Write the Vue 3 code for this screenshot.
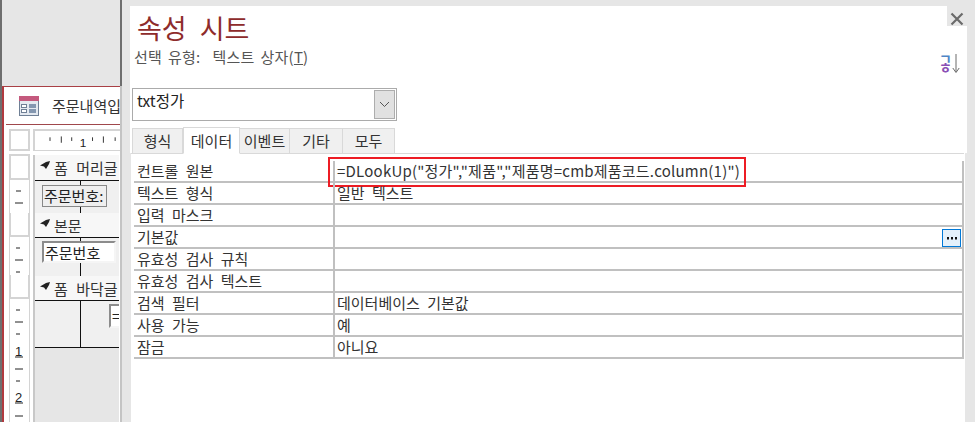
<script setup>
const rows = [
  ['컨트롤 원본', '=DLookUp("정가","제품","제품명=cmb제품코드.column(1)")'],
  ['텍스트 형식', '일반 텍스트'],
  ['입력 마스크', ''],
  ['기본값', ''],
  ['유효성 검사 규칙', ''],
  ['유효성 검사 텍스트', ''],
  ['검색 필터', '데이터베이스 기본값'],
  ['사용 가능', '예'],
  ['잠금', '아니요'],
]
const tabs = ['형식', '데이터', '이벤트', '기타', '모두']
</script>

<template>
  <div class="app">
    <section class="designer">
      <div class="form-window">
        <div class="win-title">
          <svg class="form-icon" width="20" height="20" viewBox="0 0 20 20">
            <rect x="0.5" y="0.5" width="19" height="19" fill="#e4e9f0" stroke="#6f7f95" />
            <rect x="0" y="0" width="20" height="5" fill="#c4597d" />
            <rect x="2.5" y="8.5" width="5" height="3" fill="#fff" stroke="#6f7f95" />
            <rect x="2.5" y="13.5" width="5" height="3" fill="#fff" stroke="#6f7f95" />
            <rect x="10" y="8" width="7" height="4" fill="#8497b0" />
            <rect x="10" y="13" width="7" height="4" fill="#8497b0" />
          </svg>
          <span class="win-name">주문내역입력</span>
        </div>
        <div class="ruler-row">
          <div class="corner"></div>
          <svg class="h-ruler" width="87" height="21" viewBox="0 0 87 21">
            <path d="M12 7v4M24.500 6v7M36 7v4M59 7v4M71 6v7M84 7v4" stroke="#222" fill="none" />
            <text x="45" y="18" class="ruler-num">1</text>
          </svg>
        </div>
        <div class="design-body">
          <div class="v-ruler">
            <div class="sel sel-top"></div>
            <svg class="v-marks" width="19" height="33" viewBox="0 0 19 33"><path d="M6 11h5M5 23h8" stroke="#222" fill="none"/></svg>
            <div class="sel"></div>
            <svg class="v-marks" width="19" height="38" viewBox="0 0 19 38"><path d="M6 11h4M5 23h8M6 35h4" stroke="#222" fill="none"/></svg>
            <div class="sel"></div>
            <svg class="v-marks" width="19" height="123" viewBox="0 0 19 123">
              <path d="M6 11h4M5 23h8M6 35h4M5 58h8M5 70h8M6 82h4M5 104h8M5 117h8" stroke="#222" fill="none"/>
              <text x="5" y="57" class="ruler-num">1</text>
              <text x="5" y="103" class="ruler-num">2</text>
            </svg>
          </div>
          <div class="sections">
            <div class="band band-1"><svg class="mark" width="10" height="8" viewBox="0 0 10 8"><path d="M0 4.500L6 1L10 0L9 3L6 8L4 5.500z" fill="#222"/></svg>폼 머리글</div>
            <div class="area area-head">
              <span class="ctl-label">주문번호:</span>
            </div>
            <div class="band"><svg class="mark" width="10" height="8" viewBox="0 0 10 8"><path d="M0 4.500L6 1L10 0L9 3L6 8L4 5.500z" fill="#222"/></svg>본문</div>
            <div class="area area-body">
              <span class="ctl-input">주문번호</span>
            </div>
            <div class="band"><svg class="mark" width="10" height="8" viewBox="0 0 10 8"><path d="M0 4.500L6 1L10 0L9 3L6 8L4 5.500z" fill="#222"/></svg>폼 바닥글</div>
            <div class="area area-foot">
              <span class="ctl-input ctl-foot">=</span>
            </div>
          </div>
        </div>
      </div>
    </section>

    <div class="split"></div>

    <main class="panel-wrap">
      <div class="close-row"><span class="close">
        <svg width="14" height="14" viewBox="0 0 14 14"><path d="M1.500 1.500l11 11M12.500 1.500l-11 11" stroke="#6b6b6b" stroke-width="2.200" fill="none"/></svg>
      </span></div>
      <div class="panel">
        <h1 class="title">속성 시트</h1>
        <div class="sub-row">
          <span class="sub">선택 유형:&nbsp; 텍스트 상자(<u>T</u>)</span>
          <span class="sort">
            <span class="sort-glyphs"><i class="g1">ㄱ</i><i class="g2">ㅎ</i></span>
            <svg width="8" height="20" viewBox="0 0 8 20"><path d="M4 0v18M0.800 14l3.200 4.500L7.200 14" stroke="#6a6a6a" fill="none"/></svg>
          </span>
        </div>
        <div class="combo">
          <span class="combo-text">txt정가</span>
          <span class="combo-btn">
            <svg width="11" height="7" viewBox="0 0 11 7"><path d="M1 1l4.500 4.500L10 1" stroke="#555" fill="none"/></svg>
          </span>
        </div>
        <div class="tabs">
          <span v-for="(t, i) in tabs" :key="t" class="tab" :class="{ active: i === 1 }">{{ t }}</span>
        </div>
        <div class="grid">
          <div v-for="(r, i) in rows" :key="r[0]" class="row">
            <div class="cell-k">{{ r[0] }}</div>
            <div class="cell-v" :class="{ formula: i === 0 }">
              <span>{{ r[1] }}</span>
              <span v-if="i === 3" class="dots">
                <svg width="10" height="3" viewBox="0 0 10 3"><path d="M0 0h2v2.400H0zM4 0h2v2.400H4zM8 0h2v2.400H8z" fill="#111"/></svg>
              </span>
              <span v-if="i === 0" class="redbox"></span>
            </div>
          </div>
        </div>
      </div>
    </main>
  </div>
</template>

<style>
html, body { margin: 0; padding: 0; background: #e6e6e6; overflow: hidden; }
</style>

<style scoped>
.app {
  width: 975px; height: 422px; display: flex; background: #e6e6e6; overflow: hidden;
  font-family: "Noto Sans CJK KR", "Open Sans", sans-serif; font-size: 15px; color: #333;
}
.designer {
  width: 120px; box-sizing: border-box; padding: 86px 0 0; flex: none;
  border-left: 2px solid #6e6e6e; overflow: hidden;
}
.form-window {
  width: 130px; height: 336px; background: #fff;
  border-left: 2px solid #b03a3f; border-top: 1px solid #a94045; box-sizing: border-box;
}
.win-title {
  height: 38px; margin-left: 2px; border-bottom: 1px solid #a0484c; background: #fff;
  display: flex; align-items: center; box-sizing: border-box; padding: 0 0 0 13px; gap: 13px;
  white-space: nowrap; overflow: hidden; width: 114px;
}
.form-icon { flex: none; }
.win-name { color: #333; }
.ruler-row { display: flex; gap: 3px; padding: 4px 0 3px 5px; background: #fff; height: 29px; box-sizing: border-box; }
.corner { width: 21px; height: 22px; border: 2px solid #d4d4d4; box-sizing: border-box; flex: none; }
.h-ruler { flex: none; background: #fff; border: 2px solid #d4d4d4; border-right: 0; border-bottom-width: 1px; box-sizing: content-box; height: 19px; }
.ruler-num { font: 13px "Liberation Sans", sans-serif; fill: #222; }
.design-body { display: flex; width: 116px; background: #fff; }
.v-ruler {
  width: 21px; margin-left: 5px; margin-right: 3px; border: 2px solid #d4d4d4; border-width: 0 1px;
  background: #fff; flex: none; box-sizing: border-box; display: flex; flex-direction: column; height: 268px;
}
.sel { height: 24px; border-bottom: 2px solid #d4d4d4; flex: none; box-sizing: border-box; border-left: 1px solid #d4d4d4; border-right: 1px solid #d4d4d4; }
.sel-top { height: 26px; border-top: 2px solid #d4d4d4; }
.v-marks { flex: none; display: block; }
.sections { width: 86px; flex: none; overflow: hidden; margin-top: 1px; height: 267px; background: #e6e6e6; border-left: 2px solid #c8c8c8; box-sizing: border-box; }
.band {
  height: 25px; background: #f7f7f7; border-bottom: 1px solid #111; color: #333; box-sizing: border-box;
  white-space: nowrap; padding-left: 5px; line-height: 23px; word-spacing: 5px;
  display: flex; align-items: center; gap: 4px;
}
.band-1 { height: 26px; }
.mark { flex: none; margin-top: -5px; }
.area {
  position: relative; background: #f0f0f0;
  background-image: linear-gradient(#111, #111); background-size: 1px 100%; background-position: 45px 0; background-repeat: no-repeat;
  box-sizing: border-box; white-space: nowrap;
}
.area-head { height: 32px; padding: 4px 0 0 7px; }
.area-body { height: 38px; padding: 3px 0 0 7px; }
.area-foot { height: 47px; padding: 3px 0 0 74px; border-bottom: 1px solid #111; }
.ctl-label { display: inline-block; height: 22px; line-height: 20px; border: 1px solid #888; width: 65px; box-sizing: border-box; background: #efefef; color: #222; padding-left: 1px; overflow: hidden; }
.ctl-input { display: inline-block; height: 22px; line-height: 19px; width: 74px; box-sizing: border-box; background: #fff; border: 2px solid; border-color: #8c8c8c #f5f5f5 #f5f5f5 #8c8c8c; color: #222; padding-left: 1px; overflow: hidden; }
.ctl-foot { height: 24px; }

.split { width: 2px; flex: none; background: linear-gradient(#6e6e6e 86px, #c4c4c4 86px); }
.panel-wrap { width: 853px; flex: none; padding-left: 8px; box-sizing: border-box; display: flex; flex-direction: column; position: relative; }
.close-row { height: 6px; position: relative; }
.close { position: absolute; right: 11px; top: 9px; width: 14px; height: 14px; }
.panel {
  width: 837px; flex: 1; background: #fff; box-sizing: border-box; padding: 0 0 0 1px;
  clip-path: polygon(0 0, 817px 0, 817px 20px, 100% 20px, 100% 147px, 835px 147px, 835px 100%, 1px 100%, 1px 147px, 0 147px);
  display: flex; flex-direction: column;
}
.title { margin: 4px 0 0 6px; font-size: 27px; font-weight: 400; color: #8e2b2b; line-height: 36px; word-spacing: 7px; }
.sub-row { display: flex; justify-content: space-between; margin-left: 3px; height: 42px; }
.sub { color: #555; line-height: 20px; margin-top: 1px; word-spacing: 2.500px; letter-spacing: 0.200px; }
.sort { display: flex; margin: 8px 7px 0 0; align-items: flex-start; gap: 1px; }
.sort-glyphs { display: flex; flex-direction: column; width: 12px; font-size: 14px; line-height: 9px; font-weight: 700; }
.sort-glyphs i { font-style: normal; display: block; }
.g1 { color: #4f86c6; }
.g2 { color: #8a4fb5; }
.combo { width: 265px; height: 33px; margin: 0 0 0 1px; border: 1px solid #ababab; box-sizing: border-box; display: flex; justify-content: space-between; padding: 1px; flex: none; }
.combo-text { font-size: 15.500px; color: #222; padding: 0 0 0 3px; line-height: 20px; }
.combo-btn { width: 21px; background: #e1e1e1; border: 1px solid #adadad; box-sizing: border-box; display: flex; align-items: center; justify-content: center; }
.tabs { display: flex; margin: 5px 0 0 1px; height: 27px; align-items: flex-end; flex: none; }
.tab { height: 25px; background: #f0f0f0; border: 1px solid #d9d9d9; border-bottom: 0; box-sizing: border-box; width: 51px; text-align: center; line-height: 23px; color: #333; }
.tab.active { width: 57px; height: 27px; background: #fff; line-height: 25px; border-bottom: 1px solid #fff; margin-bottom: -1px; position: relative; }
.tab:nth-child(3) { width: 50px; border-left: 0; }
.tab:nth-child(4) { width: 53px; border-left: 0; }
.tab:nth-child(5) { width: 52px; border-left: 0; }
.grid { border-top: 1px solid #d9d9d9; width: 833px; padding: 7px 0 0 3px; box-sizing: border-box; }
.row { height: 22px; display: grid; grid-template-columns: 199px 1fr; border-bottom: 2px solid #c0c0c0; border-right: 2px solid #c0c0c0; box-sizing: border-box; }
.cell-k { padding-left: 3px; line-height: 20px; white-space: nowrap; color: #333; word-spacing: 4px; }
.cell-v { position: relative; border-left: 2px solid #c0c0c0; padding-left: 2px; line-height: 20px; color: #333; white-space: nowrap; word-spacing: 4px; }
.formula { letter-spacing: 0.220px; }
.dots { position: absolute; right: 1px; top: 2px; width: 19px; height: 18px; background: #e5f1fb; border: 1px solid #0078d7; box-sizing: border-box; display: flex; align-items: center; justify-content: center; }
.redbox { position: absolute; left: -7px; top: -4px; width: 418px; height: 30px; border: 2px solid #ed1c24; box-sizing: border-box; }
</style>
